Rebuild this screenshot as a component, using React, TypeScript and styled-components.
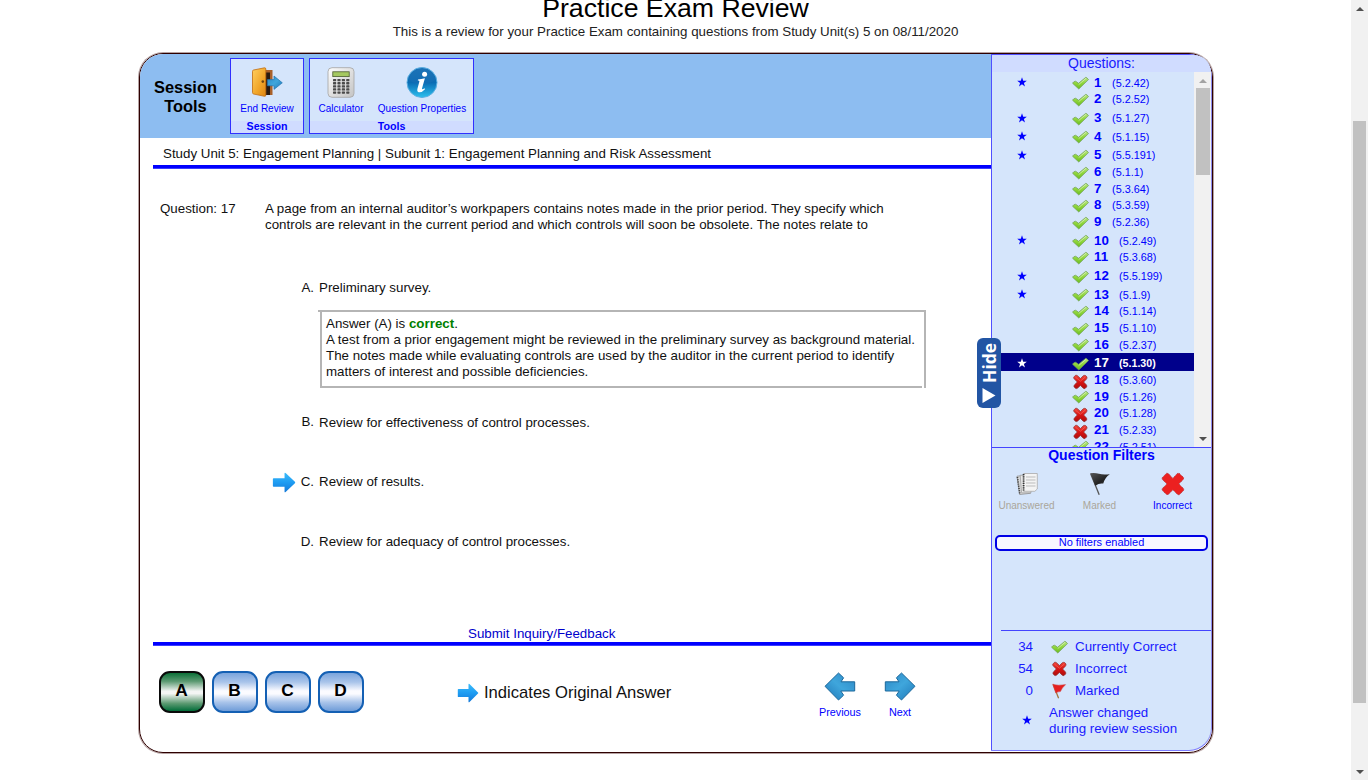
import React from 'react';
import styled, { createGlobalStyle, css } from 'styled-components';

const GlobalStyle = createGlobalStyle`
  html, body { margin: 0; padding: 0; overflow: hidden; background: #fff; }
  * { box-sizing: border-box; }
  body { font: 13.33px/16px "Liberation Sans", Arial, sans-serif; color: #111; }
  svg { display: block; flex: none; }
`;

/* ---------- page shell ---------- */
const Page = styled.div`
  display: flex;
  width: 1368px;
  height: 780px;
  overflow: hidden;
`;
const Main = styled.main`
  flex: 1;
  min-width: 0;
`;
const Header = styled.header`
  display: flow-root;
  height: 53px;
  text-align: center;
`;
const Title = styled.h1`
  margin: -7px 0 0;
  font-weight: 400;
  font-size: 26.67px;
  line-height: 31px;
  color: #000;
`;
const Subtitle = styled.p`
  margin: 0;
  color: #222;
`;
const Frame = styled.section`
  display: flex;
  width: 1074px;
  height: 700px;
  margin-left: 139px;
  border: 1px solid #2e0000;
  border-radius: 24px;
  box-shadow: 0 0 0 1px rgba(60, 10, 10, 0.38);
`;

/* ---------- scroll bars ---------- */
const Track = styled.div`
  display: flex;
  flex-direction: column;
  align-items: center;
  flex: none;
  width: 17px;
  background: #f1f1f1;
`;
const ArrowCell = styled.div`
  display: flex;
  align-items: center;
  justify-content: center;
  height: 17px;
`;
const Thumb = styled.div<{ $gap: number; $height: number }>`
  width: 13px;
  height: ${(p) => p.$height}px;
  margin: ${(p) => p.$gap}px 0 auto;
  background: #c1c1c1;
`;
const InnerThumb = styled(Thumb)`
  width: 14px;
`;

const ScrollArrow = ({ down, color = '#505050' }: { down?: boolean; color?: string }) => (
  <svg width="8" height="4" viewBox="0 0 8 4">
    <path d={down ? 'M0 0H8L4 4Z' : 'M0 4H8L4 0Z'} fill={color} />
  </svg>
);

/* ---------- left column ---------- */
const Content = styled.div`
  display: flex;
  flex-direction: column;
  width: 851px;
`;
const Toolbar = styled.div`
  display: flex;
  align-items: flex-start;
  height: 84px;
  padding: 4px 0 0 0;
  background: #8dbdf1;
  border-top-left-radius: 23px;
`;
const ToolbarTitle = styled.div`
  width: 90px;
  padding: 20px 0 0 1px;
  text-align: center;
  font-weight: 700;
  font-size: 16.4px;
  line-height: 19px;
  color: #000;
`;
const ToolGroup = styled.div<{ $width: number }>`
  display: flex;
  flex-direction: column;
  width: ${(p) => p.$width}px;
  height: 76px;
  margin-right: 5px;
  border: 1px solid #3030ff;
  background: #d5e5fb;
`;
const ToolItems = styled.div`
  display: flex;
  height: 62px;
  padding-top: 8px;
`;
const Tool = styled.div<{ $width: number }>`
  display: flex;
  flex-direction: column;
  align-items: center;
  width: ${(p) => p.$width}px;
  font-size: 10px;
  line-height: 12px;
  color: #0000ff;
  white-space: nowrap;
  svg { margin-bottom: 5px; }
`;
const GroupName = styled.div`
  height: 12px;
  background: #d0dcff;
  text-align: center;
  font-weight: 700;
  font-size: 10.67px;
  line-height: 11px;
  color: #0000ff;
`;
const UnitBar = styled.div`
  height: 27px;
  padding: 8px 0 0 23px;
`;
const Rule = styled.div`
  height: 4px;
  margin-left: 13px;
  background: linear-gradient(#0000ff 3px, #3c3cff 3px);
`;
const Body = styled.div`
  display: flex;
  flex-direction: column;
  height: 473px;
  padding-top: 32px;
`;
const QuestionRow = styled.div`
  display: flex;
  padding-left: 20px;
  margin-bottom: 47px;
`;
const QuestionLabel = styled.div`
  width: 105px;
`;
const QuestionText = styled.div`
  white-space: nowrap;
`;
const Option = styled.div<{ $after: number }>`
  display: flex;
  align-items: center;
  height: 16px;
  padding-left: 132px;
  margin-bottom: ${(p) => p.$after}px;
`;
const OptionArrow = styled.span`
  width: 24px;
`;
const OptionLetter = styled.span<{ $raise?: boolean }>`
  width: 18px;
  margin-right: 5px;
  text-align: right;
  ${(p) => p.$raise && css`padding-bottom: 3px;`}
`;
const Explanation = styled.div`
  position: relative;
  width: 606px;
  height: 78px;
  margin: 0 0 27px 180px;
  padding: 4px 0 0 4px;
  border: 2px solid #b5b5b5;
  white-space: nowrap;
  &::before {
    content: '';
    position: absolute;
    left: -4px;
    top: -2px;
    width: 2px;
    height: 2px;
    background: #b5b5b5;
  }
  &::after {
    content: '';
    position: absolute;
    right: 0;
    bottom: -2px;
    width: 2px;
    height: 2px;
    background: #fff;
  }
`;
const Correct = styled.b`
  color: #008000;
`;
const FeedbackLink = styled.a`
  margin-top: auto;
  padding-left: 328px;
  color: #0000cc;
`;
const Footer = styled.div`
  display: flex;
  align-items: flex-start;
  padding: 25px 0 0 19px;
`;
const AnswerButton = styled.button<{ $chosen?: boolean }>`
  width: 46px;
  height: 42px;
  margin: 0 7px 0 0;
  padding: 0 1px 3px 0;
  border: 2px solid ${(p) => (p.$chosen ? '#0a0a0a' : '#1460b4')};
  border-radius: 11px;
  background: ${(p) =>
    p.$chosen
      ? 'linear-gradient(#0c7038, #5c9a72 22%, #f4f5f4 48%, #f4f5f4 54%, #5c9a72 80%, #006c38)'
      : 'linear-gradient(#7ba5dc, #a9c4ea 24%, #fbfbff 47%, #fbfbff 55%, #a9c4ea 77%, #6f9cd8)'};
  font: 700 17.3px "Liberation Sans", Arial, sans-serif;
  color: #000;
`;
const OriginalNote = styled.div`
  display: flex;
  align-items: center;
  width: 353px;
  height: 44px;
  margin-left: 86px;
  font-size: 16.6px;
  color: #111;
  gap: 5px;
`;
const NavItem = styled.div`
  display: flex;
  flex-direction: column;
  align-items: center;
  width: 60px;
  padding-top: 1px;
  font-size: 10.8px;
  line-height: 13px;
  color: #0000ff;
  svg { margin-bottom: 5px; }
`;

/* ---------- right column ---------- */
const Side = styled.aside`
  position: relative;
  display: flex;
  flex-direction: column;
  width: 221px;
  height: 697px;
  border: 1px solid #5050ff;
  border-right-color: #8c8cf0;
  border-radius: 0 23px 23px 0;
  border-bottom-color: #7c7cff;
  background: #d5e5fb;
  color: #1a1aff;
`;
const SideTitle = styled.div`
  height: 17px;
  border-top-right-radius: 22px;
  background: #d0dcff;
  text-align: center;
  font-size: 14px;
  line-height: 17px;
`;
const ListArea = styled.div`
  display: flex;
  height: 375px;
  overflow: hidden;
`;
const List = styled.div`
  width: 202px;
`;
const QuestionItem = styled.div<{ $star?: boolean; $current?: boolean; $wide?: boolean }>`
  display: grid;
  grid-template-columns: 80px 22px ${(p) => (p.$wide ? 25 : 18)}px auto;
  align-items: start;
  height: ${(p) => (p.$star ? 18.7 : 16.67)}px;
  padding-top: ${(p) => (p.$star ? 2.6 : 0.6)}px;
  line-height: 16.67px;
  font-size: ${(p) => (p.$current ? 10.67 : 10.85)}px;
  color: ${(p) => (p.$current ? '#fff' : '#0000ff')};
  background: ${(p) => (p.$current ? '#00008b' : 'transparent')};
  font-weight: ${(p) => (p.$current ? 700 : 400)};
  b { font-size: 13.33px; }
`;
const ItemStar = styled.span`
  padding: 2.6px 0 0 25px;
`;
const ItemMark = styled.span`
  padding-top: 1.6px;
`;
const Filters = styled.div`
  height: 183px;
  border-top: 1px solid #4444ff;
`;
const FiltersTitle = styled.div`
  height: 16px;
  text-align: center;
  font-weight: 700;
  font-size: 14px;
  line-height: 14px;
  color: #0000ff;
`;
const FilterRow = styled.div`
  display: flex;
  height: 71px;
  padding-top: 8px;
`;
const Filter = styled.div<{ $active?: boolean }>`
  display: flex;
  flex-direction: column;
  align-items: center;
  width: 73px;
  flex: none;
  margin-left: -2px;
  margin-right: 2px;
  font-size: 10px;
  line-height: 12px;
  color: ${(p) => (p.$active ? '#0000ff' : '#aaa69a')};
  svg { margin-bottom: 4px; }
`;
const FilterStatus = styled.div`
  height: 16px;
  margin: 0 3px;
  border: 2px solid #0000e6;
  border-radius: 5px;
  background: #f8f7ff;
  text-align: center;
  font-size: 11px;
  line-height: 10px;
  color: #0000ff;
`;
const Legend = styled.div`
  margin-left: 9px;
  padding-top: 5px;
  border-top: 1px solid #4444ff;
`;
const LegendRow = styled.div<{ $tall?: boolean }>`
  display: grid;
  grid-template-columns: 32px ${(p) => (p.$tall ? '16px' : '18px 24px')} auto;
  align-items: center;
  height: ${(p) => (p.$tall ? 38 : 22)}px;
  > :first-child { justify-self: end; }
`;
const LegendStar = styled.span`
  padding: 0 1px 2px 0;
`;
const HideTab = styled.div`
  position: absolute;
  left: -15px;
  top: 283px;
  display: flex;
  align-items: center;
  width: 24px;
  height: 70px;
  border-radius: 6px;
  background: #2255a4;
  writing-mode: vertical-rl;
  transform: rotate(180deg);
  gap: 5px;
  padding: 5px 0;
  font: 700 17.5px/26px "Open Sans", sans-serif;
  color: #fff;
`;

/* ---------- icons ---------- */
const Star = ({ color = '#0000ff' }: { color?: string }) => (
  <svg width="10" height="10" viewBox="0 0 10 10">
    <path d="M5 .3 6.2 3.8H9.8L6.9 5.9 8 9.5 5 7.3 2 9.5 3.1 5.9 .2 3.8H3.8Z" fill={color} />
  </svg>
);
const Check = () => (
  <svg width="17" height="14" viewBox="0 0 17 14">
    <path d="M.5 7.2Q1.8 5.3 3.4 5.2 4.2 5.3 6.5 7.3L13.8 1.3Q14.6 1.2 16.5 3.6L6.8 13Z" fill="url(#checkFill)" stroke="#6f9d58" strokeWidth=".7" strokeLinejoin="round" />
    <path d="M6.7 8.6 14 2.3" fill="none" stroke="#e4f7c2" strokeWidth=".9" opacity=".7" />
  </svg>
);
const Cross = () => (
  <svg width="17" height="16" viewBox="0 0 17 16">
    <path d="M1.7 3.2 3.5 1.3Q5 .9 6 2.2L8.5 4.5 11.2 1.8Q12.5 1 13.7 1.6L15 3Q15.2 4.5 14.2 5.4L11.6 8 14.3 10.8Q15.3 12 14.6 13L13 14.6Q11.9 14.8 11 14L8.4 11.4 5.7 14.1Q4.6 15 3.4 14.3L2 12.8Q1.7 11.8 2.6 10.7L5.3 8 2.4 5.1Q1.4 4 1.7 3.2Z" fill="url(#crossFill)" stroke="#8c3030" strokeWidth=".7" />
    <path d="M3.5 3.2 8.4 7.2 13.3 3" fill="none" stroke="#ff7a70" strokeWidth="1" opacity=".5" />
  </svg>
);
const BigCross = () => (
  <svg width="24" height="24" viewBox="0 0 24 24">
    <path d="M1.2 5.8 5.6 1.2 7.4 1.6 11.8 6.4 16.3 1.5 18 1.2 22.6 5.6 22.4 7.3 17.8 11.9 22.6 16.7 22.8 18.2 18.3 22.8 16.6 22.5 11.9 17.7 7.3 22.4 5.6 22.6 1.2 18.3 1.3 16.6 6 11.9 1.3 7.4Z" fill="#ec2020" stroke="#b83a40" strokeWidth=".9" strokeDasharray="1.4 .7" />
  </svg>
);
const BlackFlag = () => (
  <svg width="22" height="24" viewBox="0 0 22 24">
    <path d="M1.6 1.5 10.2 22.7" stroke="#555" strokeWidth="1.3" />
    <path d="M1.5 1.2Q6 .6 10 1.8 14 3 20.8 2.2 15.8 5.5 14.3 11.6 10.5 10.8 6.2 13.8Z" fill="url(#flagFill)" />
  </svg>
);
const RedFlag = () => (
  <svg width="16" height="16" viewBox="0 0 16 16">
    <path d="M2.2 1.5 7.6 15.2" stroke="#a5763c" strokeWidth="1.3" />
    <path d="M1.7 1.2Q7 3 14.6 1.6 11 4.8 9.4 8.6 6.8 8.6 4.8 10Z" fill="#e52020" stroke="#c44" strokeWidth=".5" />
  </svg>
);
const Pages = () => (
  <svg width="24" height="24" viewBox="0 0 24 24">
    <path d="M2 4.2 14 3 15.5 21.3 4.6 22.5Z" fill="#d9d9d9" stroke="#8e8e8e" strokeWidth=".8" />
    <path d="M5.2 3.2H16V20.8H6.6Z" fill="#e9e9e9" stroke="#999" strokeWidth=".7" />
    <path d="M8.6 1.5H22.3V17L19.8 19.3H8.6Z" fill="#f4f4f4" stroke="#aaa" strokeWidth=".8" />
    <path d="M11 5H20.5M11 8H20.5M11 11H20.5M11 14H20.5" stroke="#bbb" strokeWidth="1" />
    <path d="M8.6 2V19" stroke="#333" strokeWidth="1.8" strokeDasharray="1.2 1" />
    <path d="M2.4 5 4.8 22" stroke="#444" strokeWidth="1.6" strokeDasharray="1.2 1" />
  </svg>
);
const Door = () => (
  <svg width="32" height="31" viewBox="0 0 32 31">
    <path d="M13 3H21V28H13Z" fill="#2a1a10" />
    <path d="M13 3H21.5V28H19V5.4H13Z" fill="#a8602a" />
    <path d="M1.5 4.3Q1.5 3.2 2.6 3L13.5.8Q14.8.7 14.8 2V28Q14.8 29.6 13.5 29.3L2.6 27Q1.5 26.7 1.5 25.6Z" fill="url(#doorFill)" stroke="#c06c10" strokeWidth=".8" />
    <circle cx="11.8" cy="14.6" r="1.3" fill="#6c4410" />
    <path d="M16.5 12.6H23V9L31.3 15.8 23 22.4V18.8H16.5Z" fill="url(#arrowFill)" stroke="#2474b0" strokeWidth=".7" />
  </svg>
);
const Calculator = () => (
  <svg width="28" height="31" viewBox="0 0 28 31">
    <rect x="1" y=".7" width="26" height="29.6" rx="4" fill="url(#calcFill)" stroke="#aaa" strokeWidth=".9" />
    <rect x="5.8" y="4.8" width="16.4" height="4.8" fill="#a4c860" stroke="#4c5c30" strokeWidth=".8" />
    <g fill="#4a4a4a">
      {[12, 15.1, 18.2, 21.3, 24.4].map((y) =>
        [6, 10.4, 14.8, 19.2].map((x) => <rect key={`${x}-${y}`} x={x} y={y} width="3.2" height="2.3" rx=".6" />),
      )}
    </g>
  </svg>
);
const Info = () => (
  <svg width="32" height="31" viewBox="0 0 32 31">
    <circle cx="16" cy="15.5" r="15" fill="url(#infoFill)" stroke="#5aaee0" strokeWidth="1" />
    <path d="M2.6 13A13.6 13.6 0 0 1 29.4 13Q16 22 2.6 13Z" fill="#1f6fb4" opacity=".35" />
    <circle cx="18.6" cy="7.2" r="2.5" fill="#fff" />
    <path d="M12 12.4Q15.2 12.2 18.9 11.2L16 21.6Q15.7 23.2 18.6 21.2L19 22.2Q15.8 25.7 13 25.3 10.6 24.6 11.5 21.4L13.4 14.6Q13.6 13.5 11.8 13.6Z" fill="#fff" />
  </svg>
);
const OriginalArrow = ({ width, height }: { width: number; height: number }) => (
  <svg width={width} height={height} viewBox="0 0 22 20" preserveAspectRatio="none">
    <path d="M.8 6.6Q.8 6 1.5 6H11.5V1.2Q11.6.2 12.5 1L21 9.4Q21.6 10 21 10.6L12.5 19Q11.6 19.8 11.5 18.8V14H1.5Q.8 14 .8 13.4Z" fill="url(#origFill)" />
  </svg>
);
const NavArrow = ({ back }: { back?: boolean }) => (
  <svg width="32" height="29" viewBox="0 0 32 29">
    <g transform={back ? 'translate(32 0) scale(-1 1)' : undefined}>
      <path d="M1.3 9.8H15L12.4 5.8 17.5 1 31 14.3 17.5 28 12.4 23.2 15.2 19H1.3Z" fill="url(#arrowFill)" stroke="#1c689c" strokeWidth="1" strokeLinejoin="round" />
    </g>
  </svg>
);
const HideTriangle = () => (
  <svg width="14" height="15" viewBox="0 0 14 15">
    <path d="M13.5 0V15L.5 7.5Z" fill="#fff" />
  </svg>
);
const GradientDefs = styled.svg`
  position: absolute;
`;
const Gradients = () => (
  <GradientDefs width="0" height="0">
    <defs>
      <linearGradient id="checkFill" x1="0" y1="0" x2="0" y2="1"><stop offset="0" stopColor="#b9e48a" /><stop offset=".5" stopColor="#8fd63c" /><stop offset="1" stopColor="#6cbc20" /></linearGradient>
      <linearGradient id="crossFill" x1="0" y1="0" x2="0" y2="1"><stop offset="0" stopColor="#f2463c" /><stop offset=".5" stopColor="#d81414" /><stop offset="1" stopColor="#b00c0c" /></linearGradient>
      <linearGradient id="flagFill" x1="0" y1="0" x2="1" y2="1"><stop offset="0" stopColor="#555" /><stop offset=".6" stopColor="#222" /><stop offset="1" stopColor="#444" /></linearGradient>
      <linearGradient id="doorFill" x1="0" y1="0" x2="1" y2="1"><stop offset="0" stopColor="#ffd060" /><stop offset=".6" stopColor="#f0a428" /><stop offset="1" stopColor="#dc8414" /></linearGradient>
      <linearGradient id="arrowFill" x1="0" y1="0" x2="1" y2="1"><stop offset="0" stopColor="#2c86c4" /><stop offset=".5" stopColor="#3fa6dc" /><stop offset="1" stopColor="#1f78b8" /></linearGradient>
      <linearGradient id="calcFill" x1="0" y1="0" x2="1" y2="1"><stop offset="0" stopColor="#fdfdfd" /><stop offset="1" stopColor="#c4c4c4" /></linearGradient>
      <linearGradient id="infoFill" x1="0" y1="0" x2="0" y2="1"><stop offset="0" stopColor="#1c74b8" /><stop offset=".5" stopColor="#0a6cb4" /><stop offset="1" stopColor="#2cc0ee" /></linearGradient>
      <linearGradient id="origFill" x1="0" y1="0" x2="0" y2="1"><stop offset="0" stopColor="#3cbcfa" /><stop offset=".5" stopColor="#1e9cf2" /><stop offset="1" stopColor="#1478d8" /></linearGradient>
    </defs>
  </GradientDefs>
);

/* ---------- data ---------- */
type Item = { ref: string; star?: boolean; wrong?: boolean };
const items: Item[] = [
  { ref: '5.2.42', star: true },
  { ref: '5.2.52' },
  { ref: '5.1.27', star: true },
  { ref: '5.1.15', star: true },
  { ref: '5.5.191', star: true },
  { ref: '5.1.1' },
  { ref: '5.3.64' },
  { ref: '5.3.59' },
  { ref: '5.2.36' },
  { ref: '5.2.49', star: true },
  { ref: '5.3.68' },
  { ref: '5.5.199', star: true },
  { ref: '5.1.9', star: true },
  { ref: '5.1.14' },
  { ref: '5.1.10' },
  { ref: '5.2.37' },
  { ref: '5.1.30', star: true },
  { ref: '5.3.60', wrong: true },
  { ref: '5.1.26' },
  { ref: '5.1.28', wrong: true },
  { ref: '5.2.33', wrong: true },
  { ref: '5.2.51' },
];
const CURRENT = 17;

export default function App() {
  return (
    <Page>
      <GlobalStyle />
      <Gradients />
      <Main>
        <Header>
          <Title>Practice Exam Review</Title>
          <Subtitle>This is a review for your Practice Exam containing questions from Study Unit(s) 5 on 08/11/2020</Subtitle>
        </Header>
        <Frame>
          <Content>
            <Toolbar>
              <ToolbarTitle>Session<br />Tools</ToolbarTitle>
              <ToolGroup $width={74}>
                <ToolItems>
                  <Tool $width={72}><Door />End Review</Tool>
                </ToolItems>
                <GroupName>Session</GroupName>
              </ToolGroup>
              <ToolGroup $width={165}>
                <ToolItems>
                  <Tool $width={62}><Calculator />Calculator</Tool>
                  <Tool $width={100}><Info />Question Properties</Tool>
                </ToolItems>
                <GroupName>Tools</GroupName>
              </ToolGroup>
            </Toolbar>
            <UnitBar>Study Unit 5: Engagement Planning | Subunit 1: Engagement Planning and Risk Assessment</UnitBar>
            <Rule />
            <Body>
              <QuestionRow>
                <QuestionLabel>Question: 17</QuestionLabel>
                <QuestionText>
                  A page from an internal auditor’s workpapers contains notes made in the prior period. They specify which<br />
                  controls are relevant in the current period and which controls will soon be obsolete. The notes relate to
                </QuestionText>
              </QuestionRow>
              <Option $after={14}><OptionArrow /><OptionLetter>A.</OptionLetter>Preliminary survey.</Option>
              <Explanation>
                Answer (A) is <Correct>correct</Correct>.<br />
                A test from a prior engagement might be reviewed in the preliminary survey as background material.<br />
                The notes made while evaluating controls are used by the auditor in the current period to identify<br />
                matters of interest and possible deficiencies.
              </Explanation>
              <Option $after={43}><OptionArrow /><OptionLetter $raise>B.</OptionLetter>Review for effectiveness of control processes.</Option>
              <Option $after={44}>
                <OptionArrow><OriginalArrow width={24} height={21} /></OptionArrow>
                <OptionLetter>C.</OptionLetter>Review of results.
              </Option>
              <Option $after={0}><OptionArrow /><OptionLetter>D.</OptionLetter>Review for adequacy of control processes.</Option>
              <FeedbackLink>Submit Inquiry/Feedback</FeedbackLink>
            </Body>
            <Rule />
            <Footer>
              <AnswerButton $chosen>A</AnswerButton>
              <AnswerButton>B</AnswerButton>
              <AnswerButton>C</AnswerButton>
              <AnswerButton>D</AnswerButton>
              <OriginalNote><OriginalArrow width={22} height={20} />Indicates Original Answer</OriginalNote>
              <NavItem><NavArrow back />Previous</NavItem>
              <NavItem><NavArrow />Next</NavItem>
            </Footer>
          </Content>
          <Side>
            <SideTitle>Questions:</SideTitle>
            <ListArea>
              <List>
                {items.map((item, i) => {
                  const n = i + 1;
                  const current = n === CURRENT;
                  return (
                    <QuestionItem key={n} $star={item.star} $current={current} $wide={n > 9}>
                      <ItemStar>{item.star && <Star color={current ? '#fff' : '#0000ff'} />}</ItemStar>
                      <ItemMark>{item.wrong ? <Cross /> : <Check />}</ItemMark>
                      <b>{n}</b>
                      <span>({item.ref})</span>
                    </QuestionItem>
                  );
                })}
              </List>
              <Track>
                <ArrowCell><ScrollArrow color="#a3a3a3" /></ArrowCell>
                <InnerThumb $gap={-1} $height={87} />
                <ArrowCell><ScrollArrow down /></ArrowCell>
              </Track>
            </ListArea>
            <Filters>
              <FiltersTitle>Question Filters</FiltersTitle>
              <FilterRow>
                <Filter><Pages />Unanswered</Filter>
                <Filter><BlackFlag />Marked</Filter>
                <Filter $active><BigCross />Incorrect</Filter>
              </FilterRow>
              <FilterStatus>No filters enabled</FilterStatus>
            </Filters>
            <Legend>
              <LegendRow><span>34</span><span /><Check /><span>Currently Correct</span></LegendRow>
              <LegendRow><span>54</span><span /><Cross /><span>Incorrect</span></LegendRow>
              <LegendRow><span>0</span><span /><RedFlag /><span>Marked</span></LegendRow>
              <LegendRow $tall><LegendStar><Star /></LegendStar><span /><span>Answer changed<br />during review session</span></LegendRow>
            </Legend>
            <HideTab><HideTriangle />Hide</HideTab>
          </Side>
        </Frame>
      </Main>
      <Track>
        <ArrowCell><ScrollArrow /></ArrowCell>
        <Thumb $gap={104} $height={582} />
        <ArrowCell><ScrollArrow down /></ArrowCell>
      </Track>
    </Page>
  );
}
